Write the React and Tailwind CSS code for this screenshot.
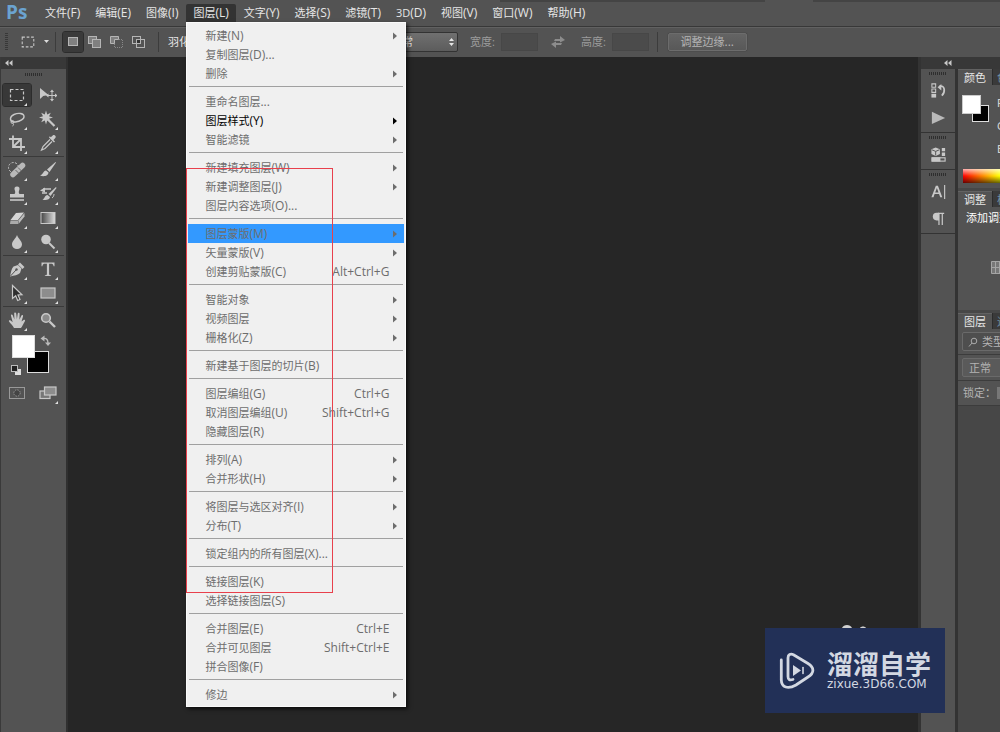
import React from "react";

const MENUS = ["文件(F)", "编辑(E)", "图像(I)", "图层(L)", "文字(Y)", "选择(S)", "滤镜(T)", "3D(D)", "视图(V)", "窗口(W)", "帮助(H)"];

const LAYER_MENU = [
  [{ t: "新建(N)", sub: true }, { t: "复制图层(D)..." }, { t: "删除", sub: true }],
  [{ t: "重命名图层..." }, { t: "图层样式(Y)", sub: true, on: true }, { t: "智能滤镜", sub: true }],
  [{ t: "新建填充图层(W)", sub: true }, { t: "新建调整图层(J)", sub: true }, { t: "图层内容选项(O)..." }],
  [{ t: "图层蒙版(M)", sub: true, hl: true }, { t: "矢量蒙版(V)", sub: true }, { t: "创建剪贴蒙版(C)", k: "Alt+Ctrl+G" }],
  [{ t: "智能对象", sub: true }, { t: "视频图层", sub: true }, { t: "栅格化(Z)", sub: true }],
  [{ t: "新建基于图层的切片(B)" }],
  [{ t: "图层编组(G)", k: "Ctrl+G" }, { t: "取消图层编组(U)", k: "Shift+Ctrl+G" }, { t: "隐藏图层(R)" }],
  [{ t: "排列(A)", sub: true }, { t: "合并形状(H)", sub: true }],
  [{ t: "将图层与选区对齐(I)", sub: true }, { t: "分布(T)", sub: true }],
  [{ t: "锁定组内的所有图层(X)..." }],
  [{ t: "链接图层(K)" }, { t: "选择链接图层(S)" }],
  [{ t: "合并图层(E)", k: "Ctrl+E" }, { t: "合并可见图层", k: "Shift+Ctrl+E" }, { t: "拼合图像(F)" }],
  [{ t: "修边", sub: true }],
];

// Sets the mnemonic suffix, e.g. "(N)", one step larger than the label.
function Label({ text }) {
  const at = text.search(/[(.]/);
  if (at < 0) return text;
  return (
    <>
      {text.slice(0, at)}
      <span className="text-xs">{text.slice(at)}</span>
    </>
  );
}

function Icon({ size = 18, children }) {
  return (
    <svg width={size} height={size} viewBox="0 0 18 18" fill="none" stroke="#c8c8c8" strokeWidth="1.4" aria-hidden="true">
      {children}
    </svg>
  );
}

const F = "#c8c8c8";

const ICONS = {
  marquee: <rect x="2.5" y="3.5" width="13" height="11" strokeDasharray="3 2" strokeWidth="1.2" />,
  move: (
    <>
      <path d="M1 2v11l3.2-3 5.3-1z" fill={F} stroke="none" />
      <path d="M13 5v9M8.500 9.500h9" strokeWidth="1" />
      <path d="M13 3.500l2 2.500h-4zM13 15.500l2-2.500h-4zM7 9.500l2.500-2v4zM18.500 9.500l-2.500-2v4z" fill={F} stroke="none" />
    </>
  ),
  lasso: (
    <>
      <path d="M5 12C1.500 10.500 1.500 6.500 6 4.500c4-1.800 9.500-1.500 10 1.500.5 3-4 5.500-8.500 6-1 .1-1.800.1-2.500 0z" />
      <circle cx="4.500" cy="12" r="1.500" strokeWidth="1" />
      <path d="M5 13.500c1 1 .5 2-.5 2.500" strokeWidth="1" />
    </>
  ),
  wand: (
    <>
      <path d="M7 .5l1.200 4 3.600-1.800L10 6.300l4 1.200-4 1.200 1.800 3.600-3.600-1.800-1.200 4-1.200-4-3.600 1.800L4 8.700 0 7.500l4-1.200-1.800-3.600 3.600 1.800z" fill={F} stroke="none" />
      <path d="M9 9.500l6.500 6.500" strokeWidth="2.200" />
    </>
  ),
  crop: <path d="M5 1.500v11.500h12M1 5h12v12M13 5l-7.500 7.500" strokeWidth="1.800" />,
  dropper: (
    <>
      <path d="M11 5.500L4 12.500l-1.500 3.500L6 14.500l7-7" strokeWidth="1.200" />
      <path d="M10 3.500l5 5 1-1-1.500-1.500 2-2.200c1-1.500-1-3.500-2.500-2.500l-2.200 2-1-1z" fill={F} stroke="none" />
    </>
  ),
  heal: (
    <>
      <circle cx="5.500" cy="6.500" r="5" strokeDasharray="2 1.500" strokeWidth="1" />
      <path d="M5 13.500L14.500 4.500" strokeWidth="5.500" strokeLinecap="round" stroke="#b9b9b9" />
      <path d="M7.500 9l3.500 3.500M10 6.500l3.500 3.500" stroke="#666" strokeWidth="1" />
    </>
  ),
  brush: (
    <>
      <path d="M16.500 1L8 8.500l2.500 2.500L17 1.500z" fill={F} stroke="none" />
      <path d="M7 9.500c-3 .3-2.500 4-6 5 3.500 1.500 8.500.5 8.500-3z" fill={F} stroke="none" />
    </>
  ),
  stamp: (
    <>
      <path d="M9 1.500c2.200 0 3 1.800 2.300 3.500-.8 2-.6 3 .2 4H16v3.500H2V9h4.500c.8-1 1-2 .2-4C6 3.300 6.800 1.500 9 1.500z" fill={F} stroke="none" />
      <path d="M2 15h14" strokeWidth="1.600" />
    </>
  ),
  history: (
    <>
      <path d="M17 2l-7.500 7 2 2L17.500 3z" fill={F} stroke="none" />
      <path d="M8.500 10c-3 .3-2.500 3.500-5 4.500 3 1.200 7.500.2 7.500-2.500z" fill={F} stroke="none" />
      <path d="M4 4h8M3 8h5" strokeWidth="1.500" />
      <path d="M1 5.500l5-3v5z" fill={F} stroke="none" />
      <path d="M13 13c1.500-1 2-2.500 2-4" strokeWidth="1" />
    </>
  ),
  eraser: (
    <>
      <path d="M8 4l8-.5-6 7.500H2.500z" fill="#d6d6d6" stroke="none" />
      <path d="M2.500 11.500H10v3.500H2z" fill="#aaa" stroke="none" />
      <path d="M10.500 11.300L16.500 4v3.500L10.500 15z" fill="#bcbcbc" stroke="none" />
    </>
  ),
  gradient: (
    <>
      <defs>
        <linearGradient id="tool-gradient"><stop offset="0" stopColor="#444" /><stop offset="1" stopColor="#ddd" /></linearGradient>
      </defs>
      <rect x="2" y="3.500" width="14" height="11" fill="url(#tool-gradient)" strokeWidth="1" />
    </>
  ),
  drop: <path d="M9 2c1.500 4 5 6 5 9.500a5 4.500 0 0 1-10 0C4 8 7.500 6 9 2z" fill={F} stroke="none" />,
  dodge: (
    <>
      <circle cx="7" cy="6.500" r="4.800" fill={F} stroke="none" />
      <path d="M10 10l5.500 5.500" strokeWidth="2" />
    </>
  ),
  pen: (
    <>
      <path d="M2 16.500c1-4.500 1.500-8 3.500-10L10 5l3.500 3.500-1.500 4.500C10 15 6.500 15.500 2 16.500z" fill={F} stroke="none" />
      <path d="M2.500 16l5.500-6" stroke="#535353" strokeWidth="1" />
      <circle cx="8.500" cy="9.500" r="1.200" fill="#535353" stroke="none" />
      <path d="M11 3.500l4.500 4.500" strokeWidth="2.600" />
    </>
  ),
  type: <path d="M2.500 2.500h13v3.800h-.9c-.3-2-1-2.600-3-2.600h-1.500v10.300c0 .9.500 1.200 2 1.200v.8H5.900v-.8c1.500 0 2-.3 2-1.200V3.700H6.400c-2 0-2.700.6-3 2.600h-.9z" fill={F} stroke="none" />,
  arrow: <path d="M4.500 1.500v13l3.200-2.800 2 4.800 2.300-1-2-4.500 4-.3z" fill="#2f2f2f" strokeWidth="1.200" />,
  rect: <rect x="2" y="4" width="14" height="10" fill="#8d8d8d" strokeWidth="1.200" />,
  hand: (
    <path
      d="M6 17c-1-2.500-3.800-4.500-5-6.500-.5-1.200.8-1.700 1.700-1l2 1.700L3 4.800c-.3-1.300 1.300-1.800 1.700-.5l1.700 4.200L6.200 2.500c0-1.400 1.800-1.400 2 0l.7 5.700.8-5.500c.2-1.300 1.900-1.100 1.900.2l-.2 5.800 1.900-4c.6-1.200 2-.6 1.700.7l-1.500 5.100 2-1.500c1-.7 2 .2 1.400 1.200C15.500 12.500 14.500 15 13 17z"
      fill={F}
      stroke="none"
    />
  ),
  zoom: (
    <>
      <circle cx="7" cy="7" r="4.300" fill="#8a8a8a" strokeWidth="1.600" />
      <path d="M10.500 10.500l5.500 5.500" strokeWidth="2.400" />
    </>
  ),
  mask: (
    <>
      <rect x="1.500" y="3.500" width="15" height="11" strokeWidth="1" stroke="#999" />
      <circle cx="9" cy="9" r="3.200" fill="#444" stroke="#999" strokeWidth="1" strokeDasharray="1.500 1" />
    </>
  ),
  screen: (
    <>
      <rect x="1" y="7" width="10" height="7.500" fill="#777" strokeWidth="1.200" />
      <rect x="5.500" y="3" width="11.500" height="8" fill="#8d8d8d" strokeWidth="1.200" />
    </>
  ),
  historyPanel: (
    <>
      <path d="M2 2h4v3.500H2zM2 7.500h4V11H2z" strokeWidth="1.100" />
      <path d="M1.500 12.500h5v4h-5z" fill={F} stroke="none" />
      <path d="M8 5.500L12 2v7z" fill={F} stroke="none" />
      <path d="M10 4.500c6-1.500 6.500 6 2.500 10" strokeWidth="1.800" />
    </>
  ),
  play: <path d="M2 3l14 6.500L2 16z" fill="#b9b9b9" stroke="none" />,
  library: (
    <>
      <path d="M6 1.500l4.500 2v5L6 10.500l-4.500-2v-5z" fill={F} stroke="none" />
      <path d="M2 4l4 1.700L10 4M6 5.700V10" stroke="#535353" strokeWidth="1" />
      <path d="M12.500 2h3.500v3.500h-3.500zM12.500 7h3.500v3.500h-3.500z" fill={F} stroke="none" />
      <rect x="2" y="12.500" width="14" height="3.500" strokeWidth="1.200" />
      <path d="M2 12h9v4.500H2z" fill={F} stroke="none" />
    </>
  ),
  character: (
    <>
      <path d="M6.200 3h2.200L13 15h-2.200l-1.200-3.300H4.900L3.700 15H1.500zM7.300 5.200L5.500 10H9z" fill={F} stroke="none" />
      <path d="M15.500 2v15" strokeWidth="1.200" />
    </>
  ),
  paragraph: (
    <>
      <path d="M9.500 3H7a4 4 0 0 0 0 8h2.500z" fill={F} stroke="none" />
      <path d="M8.500 3.500H15M9.500 3v13M13 3v13" strokeWidth="1.300" />
    </>
  ),
};

const TOOL_GROUPS = [
  [["marquee", "矩形选框"], ["move", "移动"], ["lasso", "套索"], ["wand", "魔棒"], ["crop", "裁剪"], ["dropper", "吸管"]],
  [["heal", "修复画笔"], ["brush", "画笔"], ["stamp", "图章"], ["history", "历史画笔"], ["eraser", "橡皮擦"], ["gradient", "渐变"], ["drop", "模糊"], ["dodge", "减淡"]],
  [["pen", "钢笔"], ["type", "文字"], ["arrow", "路径选择"], ["rect", "矩形"]],
  [["hand", "抓手"], ["zoom", "缩放"]],
];

function Tool({ name, label }) {
  const active = name === "marquee";
  const corner = name !== "move" && name !== "zoom" && name !== "mask";
  return (
    <button
      type="button"
      aria-label={label}
      className={"relative flex h-[22px] w-7 items-center justify-center " + (active ? "rounded-xs bg-[#383838] outline outline-1 outline-[#2c2c2c]" : "")}
    >
      <Icon>{ICONS[name]}</Icon>
      {corner && (
        <svg className="absolute right-1 bottom-0" width="3" height="3" viewBox="0 0 3 3" aria-hidden="true">
          <path d="M3 0v3H0z" fill="#e0e0e0" />
        </svg>
      )}
    </button>
  );
}

function Grip() {
  return (
    <svg width="18" height="3" viewBox="0 0 18 3" aria-hidden="true">
      <path d="M0 1.500h18" stroke="#2e2e2e" strokeWidth="3" strokeDasharray="1 1" />
    </svg>
  );
}

function Collapse() {
  return (
    <svg width="8" height="6" viewBox="0 0 8 6" aria-hidden="true">
      <path d="M3.500 0v6L0 3zM7.500 0v6L4 3z" fill="#c8c8c8" />
    </svg>
  );
}

function Toolbar() {
  return (
    <aside className="flex w-[68px] shrink-0 flex-col border-r-2 border-l border-r-[#303030] border-l-[#3a3a3a] bg-[#535353]">
      <div className="flex h-3 items-center bg-[#383838] pl-1"><Collapse /></div>
      <div className="flex h-[15px] justify-center pt-1"><Grip /></div>
      <div className="flex flex-col px-[2px]">
        {TOOL_GROUPS.map((group, i) => (
          <div key={i} className={"grid grid-cols-[28px_28px] gap-x-[3px] gap-y-[2px] " + (i > 0 ? "mt-[2px] border-t border-[#3a3a3a] pt-[2px]" : "")}>
            {group.map(([name, label]) => <Tool key={name} name={name} label={label} />)}
          </div>
        ))}
      </div>
      <div className="flex pt-1 pl-2">
        <svg width="42" height="40" viewBox="0 0 42 40" aria-hidden="true">
          <rect x="18.500" y="16.500" width="21" height="21" fill="#000" stroke="#ddd" />
          <rect x="3.500" y=".5" width="22" height="22" fill="#fff" stroke="#ddd" />
          <rect x="6" y="34" width="6" height="6" fill="#ddd" />
          <rect x="2.500" y="30.500" width="6" height="6" fill="#222" stroke="#bbb" />
          <path d="M34 3.500c4-.5 5 1.500 5 5" fill="none" stroke="#bbb" strokeWidth="1.300" />
          <path d="M31.500 3.500l4-3v6zM39 11l-3-3.500h6z" fill="#bbb" />
        </svg>
      </div>
      <div className="grid grid-cols-[28px_28px] gap-x-[3px] px-[2px] pt-[7px]">
        <Tool name="mask" label="快速蒙版" />
        <Tool name="screen" label="屏幕模式" />
      </div>
    </aside>
  );
}

function LayerMenu() {
  return (
    <div role="menu" className="absolute top-full left-0 z-20 w-[220px] border border-[#fafafa] bg-[#f0f0f0] px-px pt-[3px] pb-[2px] text-[#6d6d6d] shadow-[2px_2px_4px_rgba(0,0,0,0.7)]">
      {LAYER_MENU.map((group, i) => (
        <div key={i}>
          {i > 0 && <div role="separator" className="mx-px mt-[3px] mb-[5px] h-px bg-[#a0a0a0]" />}
          {group.map((item) => (
            <button
              key={item.t}
              type="button"
              role="menuitem"
              className={"flex h-[19px] w-full items-center pr-[7px] pl-[17px] text-left " + (item.hl ? "bg-[#3399ff] " : "") + (item.on ? "text-black" : "")}
            >
              <span className="flex-1"><Label text={item.t} /></span>
              {item.k && <span className="pr-2 text-xs">{item.k}</span>}
              {item.sub && (
                <svg width="4" height="8" viewBox="0 0 4 8" aria-hidden="true"><path d="M0 0.500l4 3.500-4 3.500z" fill="currentColor" /></svg>
              )}
            </button>
          ))}
        </div>
      ))}
      <div className="pointer-events-none absolute top-[145px] -left-px h-[425px] w-[147px] border border-[#e8404c]" />
    </div>
  );
}

function MenuBar() {
  return (
    <header className="relative flex h-[26px] items-start pt-1">
      <div className="absolute top-0 right-0 left-1/2 flex gap-12" aria-hidden="true">
        <div className="h-[2px] w-[265px] bg-[#444]" />
        <div className="h-[2px] flex-1 bg-[#444]" />
      </div>
      <span className="w-[38px] pl-[6px] text-[19px] leading-[16px] font-bold text-[#6ba3d0]">Ps</span>
      <nav className="flex gap-px">
        {MENUS.map((m) => (
          <div key={m} className="relative">
            <button type="button" className={"h-[18px] px-[7px] text-[#e6e6e6] " + (m === "图层(L)" ? "rounded-t-xs bg-[#333]" : "")}><Label text={m} /></button>
            {m === "图层(L)" && <LayerMenu />}
          </div>
        ))}
      </nav>
    </header>
  );
}

function Divider() {
  return <span className="h-5 w-px bg-[#3c3c3c]" />;
}

function OptionsBar() {
  return (
    <div className="flex h-[31px] items-center border-t border-t-[#383838] pb-px pl-[5px] text-[#d4d4d4] shadow-[inset_0_1px_0_#616161]">
      <svg width="3" height="18" viewBox="0 0 3 18" aria-hidden="true"><path d="M1.500 0v18" stroke="#383838" strokeWidth="3" strokeDasharray="1 1" /></svg>
      <button type="button" aria-label="选框预设" className="ml-3 flex items-center gap-2">
        <Icon size={16}>{ICONS.marquee}</Icon>
        <svg width="5" height="3" viewBox="0 0 5 3" aria-hidden="true"><path d="M0 0h5L2.500 3z" fill="#ddd" /></svg>
      </button>
      <div className="ml-[6px] flex items-center gap-[7px]">
        <Divider />
        <div className="flex items-center gap-[9px]">
          <button type="button" aria-label="新选区" className="-mr-1 flex h-5 w-5 items-center justify-center rounded-xs bg-[#3a3a3a] outline outline-1 outline-[#2c2c2c]">
            <svg width="12" height="12" viewBox="0 0 12 12" aria-hidden="true"><rect x="1.500" y="1.500" width="9" height="8" fill="#808080" stroke="#b5b5b5" /></svg>
          </button>
          <button type="button" aria-label="添加到选区">
            <svg width="13" height="12" viewBox="0 0 13 12" aria-hidden="true"><rect x=".5" y=".5" width="8" height="7" fill="#808080" stroke="#b5b5b5" /><rect x="4.500" y="3.500" width="8" height="8" fill="#808080" stroke="#b5b5b5" /></svg>
          </button>
          <button type="button" aria-label="从选区减去">
            <svg width="13" height="12" viewBox="0 0 13 12" aria-hidden="true"><path d="M.5 7.500v-7h8v3h-4v4z" fill="#808080" stroke="#b5b5b5" /><path d="M9 3.500h3.500v8h-8V8" fill="none" stroke="#888" strokeDasharray="1 1" /></svg>
          </button>
          <button type="button" aria-label="与选区交叉">
            <svg width="13" height="12" viewBox="0 0 13 12" aria-hidden="true"><rect x=".5" y=".5" width="8" height="7" fill="none" stroke="#b5b5b5" /><rect x="4.500" y="3.500" width="8" height="8" fill="none" stroke="#b5b5b5" /><rect x="5" y="4" width="3" height="3" fill="#333" /></svg>
          </button>
        </div>
      </div>
      <div className="ml-[13px] flex w-[224px] items-center gap-[9px]">
        <Divider />
        <span className="text-[#e6e6e6]">羽化</span>
      </div>
      <div className="relative">
        <select aria-label="样式" defaultValue="正常" className="h-5 w-[76px] appearance-none rounded-xs border border-[#333] bg-linear-to-b from-[#707070] to-[#5c5c5c] pl-2 text-[#e6e6e6]">
          <option>正常</option>
        </select>
        <svg className="pointer-events-none absolute top-[6px] right-1" width="5" height="8" viewBox="0 0 5 8" aria-hidden="true"><path d="M0 3h5L2.500 0zM0 5h5L2.500 8z" fill="#e6e6e6" /></svg>
      </div>
      <label className="ml-3 flex items-center gap-[6px] text-[#9c9c9c]">
        宽度:
        <input type="text" disabled className="h-[18px] w-[37px] border border-[#474747] bg-[#4b4b4b]" />
      </label>
      <button type="button" aria-label="交换宽高" className="ml-[13px]">
        <svg width="14" height="12" viewBox="0 0 14 12" aria-hidden="true"><path d="M4 3h5V0l5 4-5 2.500V5H3zM10 9H5v3L0 8l5-2.500V7h6z" fill="#8c8c8c" /></svg>
      </button>
      <label className="ml-4 flex items-center gap-[6px] text-[#9c9c9c]">
        高度:
        <input type="text" disabled className="h-[18px] w-[37px] border border-[#474747] bg-[#4b4b4b]" />
      </label>
      <div className="ml-2 flex items-center gap-[10px]">
        <Divider />
        <button type="button" className="h-[18px] w-[79px] rounded-xs border border-[#6c6c6c] bg-linear-to-b from-[#646464] to-[#585858] leading-4 text-[#b4b4b4] shadow-[0_0_1px_#222]"><Label text="调整边缘..." /></button>
      </div>
    </div>
  );
}

function IconGroup({ items }) {
  return (
    <div className="flex flex-col items-center border-b border-[#333]">
      <div className="flex h-[9px] items-center"><Grip /></div>
      {items.map(([name, label]) => (
        <button key={name} type="button" aria-label={label} className="flex h-[27px] w-full items-center justify-center pb-[2px]">
          <Icon size={17}>{ICONS[name]}</Icon>
        </button>
      ))}
    </div>
  );
}

function Tabs({ active, other }) {
  return (
    <div className="flex h-4 bg-[#3a3a3a]">
      <button type="button" className="w-[34px] shrink-0 border-t border-[#626262] bg-[#535353] leading-[15px] text-[#e6e6e6]">{active}</button>
      <button type="button" className="shrink-0 border-l border-[#2c2c2c] pl-1 leading-[15px] text-[#6f8fa8]">{other}</button>
    </div>
  );
}

function Dock() {
  return (
    <aside className="flex w-[82px] shrink-0 flex-col border-l-[3px] border-[#333]">
      <div className="flex h-3 items-center bg-[#383838] pl-[23px]"><Collapse /></div>
      <div className="flex flex-1">
        <div className="w-[34px] shrink-0 bg-[#535353]">
          <IconGroup items={[["historyPanel", "历史记录"], ["play", "动作"]]} />
          <IconGroup items={[["library", "属性"]]} />
          <IconGroup items={[["character", "字符"], ["paragraph", "段落"]]} />
        </div>
        <div className="flex min-w-0 flex-1 flex-col overflow-hidden border-l-[3px] border-[#333] bg-[#474747] text-[#e0e0e0]">
          <section className="h-[119px] bg-[#535353]">
            <Tabs active="颜色" other="色板" />
            <div className="flex h-[84px] gap-2 pt-[10px] pl-1">
              <svg width="27" height="28" className="shrink-0" viewBox="0 0 27 28" aria-hidden="true">
                <rect x="10.500" y="10.500" width="16" height="16" fill="#000" stroke="#ddd" />
                <rect x=".5" y=".5" width="18" height="18" fill="#fff" stroke="#ccc" />
              </svg>
              <div className="flex flex-col gap-[7px] leading-4">
                <span>R</span><span>G</span><span>B</span>
              </div>
            </div>
            <div className="ml-[5px] h-[14px] w-[220px] bg-[linear-gradient(to_bottom,rgba(255,255,255,.7),transparent_50%,rgba(0,0,0,.6)),linear-gradient(to_right,#f00,#ff0,#0f0,#0ff,#00f,#f0f,#f00)]" />
          </section>
          <section className="mt-[3px] h-[119px] bg-[#535353]">
            <Tabs active="调整" other="样式" />
            <p className="pt-[2px] pl-2 text-white">添加调整</p>
            <svg className="mt-[34px] ml-[33px]" width="13" height="13" viewBox="0 0 13 13" aria-hidden="true"><path d="M.5.500h12v12H.5zM4.500.500v12M8.500.500v12M.5 6.500h12" fill="#777" stroke="#a5a5a5" /></svg>
          </section>
          <section className="mt-[3px] bg-[#535353] text-[#b4b4b4]">
            <Tabs active="图层" other="通道" />
            <div className="border-b border-[#3c3c3c] py-[3px] pl-1">
              <button type="button" className="flex h-[19px] w-[90px] items-center gap-1 rounded-xs border border-[#6a6a6a] bg-[#4e4e4e] pl-[5px]">
                <svg width="10" height="10" viewBox="0 0 10 10" aria-hidden="true"><circle cx="6" cy="4" r="2.800" fill="none" stroke="#aaa" /><path d="M4 6L1 9.500" stroke="#aaa" /></svg>
                类型
              </button>
            </div>
            <div className="border-b border-[#3c3c3c] py-[3px] pl-1">
              <button type="button" className="flex h-[19px] w-[90px] items-center rounded-xs border border-[#6a6a6a] bg-[#5a5a5a] pl-[6px]">正常</button>
            </div>
            <div className="flex h-[25px] items-center gap-px border-b border-[#3c3c3c] pl-[5px]">
              锁定：
              <span className="h-3 w-3 shrink-0 bg-[#777]" />
            </div>
          </section>
        </div>
      </div>
    </aside>
  );
}

function Watermark() {
  return (
    <div className="absolute right-[55px] bottom-[19px] z-10 flex h-[85px] w-[180px] items-center gap-3 bg-[#223057] pl-[14px] text-[#d3d8e2]">
      <svg className="absolute -top-[3px] left-[77px]" width="28" height="3" viewBox="0 0 28 3" aria-hidden="true"><path d="M0 3c1.500-4 8.500-4 10 0zM18 3c1-2 5-2 6 0z" fill="#d0d0d0" /></svg>
      <svg width="36" height="38" viewBox="0 0 36 38" fill="none" stroke="#d3d8e2" strokeWidth="2.800" strokeLinecap="round" aria-hidden="true">
        <path d="M14 27.500c-3.500 1-5 0-5-3V6c0-3.500 2.500-4.500 5.500-3.300L29 11.500c6.500 4 6.500 9.500 0 13.500l-12 8C9 37.500 2.500 35.500 2.300 28V8" />
        <path d="M14 13v11l8-5.500z" fill="#d3d8e2" stroke="none" />
        <path d="M24 15.500v6" strokeWidth="1.600" />
      </svg>
      <div className="flex flex-col">
        <span className="text-[26px] leading-[26px] font-bold">溜溜自学</span>
        <span className="font-['DejaVu_Sans'] text-xs leading-[14px]">zixue.3D66.COM</span>
      </div>
    </div>
  );
}

export default function App() {
  return (
    <div className="relative flex min-h-screen flex-col overflow-hidden bg-[#535353] font-['Open_Sans','Noto_Sans_CJK_SC',sans-serif] text-[11px] leading-[18px] whitespace-nowrap">
      <MenuBar />
      <OptionsBar />
      <div className="flex flex-1">
        <Toolbar />
        <main className="flex-1 bg-[#262626]" />
        <Dock />
      </div>
      <Watermark />
    </div>
  );
}
